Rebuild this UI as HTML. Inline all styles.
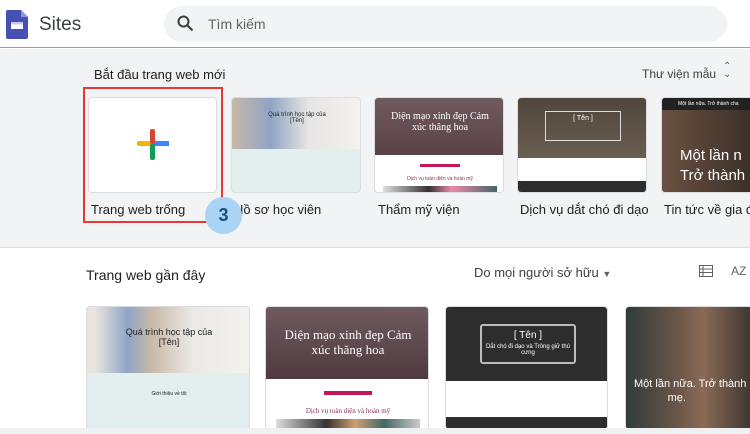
<!DOCTYPE html>
<html><head><meta charset="utf-8"><style>
*{margin:0;padding:0;box-sizing:border-box}
body{width:750px;height:434px;overflow:hidden;background:#fff;font-family:"Liberation Sans",Arial,sans-serif;color:#202124;position:relative}
.a{position:absolute;white-space:nowrap}
.hdr{left:0;top:0;width:750px;height:48px;background:#fff;border-bottom:1px solid #9aa0a6}
.gray{left:0;top:49px;width:750px;height:199px;background:#f1f3f4;border-bottom:1px solid #dadce0}
.card{border-radius:4px;overflow:hidden;border:1px solid #dadce0;background:#fff}
.lbl{font-size:13px;color:#202124}
.dark{background:#2d2d2d}
</style></head><body>
<div class="a hdr"></div>
<svg class="a" style="left:6px;top:10px" width="22" height="29" viewBox="0 0 22 29"><path d="M2 0h13l7 7v20a2 2 0 0 1-2 2H2a2 2 0 0 1-2-2V2a2 2 0 0 1 2-2z" fill="#4650b3"/><path d="M15 0v7h7z" fill="#8c93d6"/><rect x="5" y="12" width="12" height="7" fill="#fff"/><rect x="5" y="12" width="12" height="2.4" fill="#c5c8ee"/></svg>
<div class="a" style="left:39px;top:14px;font-size:19px;color:#3c4043">Sites</div>
<div class="a" style="left:164px;top:6px;width:563px;height:36px;background:#f1f3f4;border-radius:18px"></div>
<svg class="a" style="left:177px;top:15px" width="17" height="17" viewBox="0 0 17 17"><circle cx="6.5" cy="6.5" r="5" fill="none" stroke="#3c4043" stroke-width="2"/><path d="M10 10l5.5 5.5" stroke="#3c4043" stroke-width="2.2"/></svg>
<div class="a" style="left:208px;top:16px;font-size:14px;color:#5f6368">Tìm kiếm</div>

<div class="a gray"></div>
<div class="a" style="left:94px;top:67px;font-size:13px">Bắt đầu trang web mới</div>
<div class="a" style="left:642px;top:67px;font-size:12px;color:#3c4043">Thư viện mẫu</div>
<div class="a" style="left:723px;top:63px;font-size:10px;line-height:8px;color:#5f6368">⌃<br>⌄</div>

<div class="a card" style="left:88px;top:97px;width:129px;height:96px"></div>
<div class="a" style="left:137px;top:141px;width:32px;height:5px;background:#f4b400;border-radius:2px"></div>
<div class="a" style="left:153px;top:141px;width:16px;height:5px;background:#4285f4"></div>
<div class="a" style="left:150px;top:129px;width:5px;height:15px;background:#db4437;border-radius:2px"></div>
<div class="a" style="left:150px;top:144px;width:5px;height:16px;background:#0f9d58;border-radius:2px"></div>

<div class="a card" style="left:231px;top:97px;width:130px;height:96px;background:#e3efee">
 <div style="height:51px;background:linear-gradient(90deg,#c9b8a8,#8ea4c4 30%,#e8e6e2 60%,#f3f2ef)"></div>
 <div style="position:absolute;left:30px;top:14px;font-size:6px;text-align:center;width:70px;white-space:normal">Quá trình học tập của [Tên]</div>
</div>
<div class="a card" style="left:374px;top:97px;width:130px;height:96px">
 <div style="height:57px;background:linear-gradient(#6f5a5e,#5a4248)"></div>
 <div style="position:absolute;left:10px;top:13px;width:110px;font-family:'Liberation Serif',serif;font-size:10px;color:#fff;text-align:center;white-space:normal">Diện mạo xinh đẹp Cảm xúc thăng hoa</div>
 <div style="position:absolute;left:45px;top:66px;width:40px;height:3px;background:#c2185b"></div>
 <div style="position:absolute;left:10px;top:78px;width:110px;font-size:5px;color:#8a2f5a;text-align:center">Dịch vụ toàn diện và hoàn mỹ</div>
 <div style="position:absolute;left:8px;top:88px;width:114px;height:8px;background:linear-gradient(90deg,#ddd,#333 40%,#e8a 60%,#466)"></div>
</div>
<div class="a card" style="left:517px;top:97px;width:130px;height:96px">
 <div style="height:60px;background:linear-gradient(#50463c,#6a5e50)"></div>
 <div style="position:absolute;left:27px;top:13px;width:76px;height:30px;border:1px solid #ddd;color:#fff;font-size:7px;text-align:center;padding-top:3px">[ Tên ]</div>
 <div style="position:absolute;left:0;bottom:0;width:130px;height:11px;background:#2d2d2d"></div>
</div>
<div class="a card" style="left:661px;top:97px;width:95px;height:96px;background:linear-gradient(90deg,#6a5040,#3a2e28)">
 <div style="height:12px;background:#222;font-size:5px;color:#fff;padding:3px 0 0 16px">Một lần nữa. Trở thành cha</div>
 <div style="position:absolute;left:18px;top:48px;font-size:15px;color:#fff;line-height:20px">Một lần n<br>Trở thành</div>
</div>

<div class="a lbl" style="left:91px;top:202px">Trang web trống</div>
<div class="a lbl" style="left:234px;top:202px">Hồ sơ học viên</div>
<div class="a lbl" style="left:378px;top:202px">Thẩm mỹ viện</div>
<div class="a lbl" style="left:520px;top:202px">Dịch vụ dắt chó đi dạo</div>
<div class="a lbl" style="left:664px;top:202px">Tin tức về gia đình</div>

<div class="a" style="left:83px;top:87px;width:140px;height:136px;border:2px solid #e53935"></div>
<div class="a" style="left:205px;top:197px;width:37px;height:37px;border-radius:50%;background:#a9d4f5;color:#1a4d80;font-size:18px;font-weight:bold;text-align:center;line-height:37px">3</div>

<div class="a" style="left:86px;top:267px;font-size:14px">Trang web gần đây</div>
<div class="a" style="left:474px;top:265px;font-size:13px;color:#3c4043">Do mọi người sở hữu <span style="font-size:9px;color:#5f6368">▼</span></div>
<svg class="a" style="left:699px;top:265px" width="14" height="12" viewBox="0 0 14 12"><rect x="0.5" y="0.5" width="13" height="11" fill="none" stroke="#5f6368"/><path d="M0 4h14M0 7.5h14M4 0v12" stroke="#5f6368"/></svg>
<div class="a" style="left:731px;top:264px;font-size:12px;color:#5f6368">AZ</div>

<div class="a card" style="left:86px;top:306px;width:164px;height:124px;background:#e3efee">
 <div style="height:66px;background:linear-gradient(90deg,#e8e4de 5%,#8fa6c6 25%,#c9b9a8 40%,#ebe9e5 65%,#f3f2ef)"></div>
 <div style="position:absolute;left:30px;top:20px;width:104px;font-size:9px;text-align:center;white-space:normal">Quá trình học tập của [Tên]</div>
 <div style="position:absolute;left:0;top:84px;width:164px;font-size:5px;text-align:center">Giới thiệu về tôi</div>
</div>
<div class="a card" style="left:265px;top:306px;width:164px;height:124px">
 <div style="height:72px;background:linear-gradient(#6f5a5e,#4e3a40)"></div>
 <div style="position:absolute;left:8px;top:20px;width:148px;font-family:'Liberation Serif',serif;font-size:13px;line-height:15px;color:#fff;text-align:center;white-space:normal">Diện mạo xinh đẹp Cảm xúc thăng hoa</div>
 <div style="position:absolute;left:58px;top:84px;width:48px;height:4px;background:#c2185b"></div>
 <div style="position:absolute;left:0;top:100px;width:164px;font-family:'Liberation Serif',serif;font-size:7px;color:#8a2f5a;text-align:center">Dịch vụ toàn diện và hoàn mỹ</div>
 <div style="position:absolute;left:10px;top:112px;width:144px;height:12px;background:linear-gradient(90deg,#ddd,#333 35%,#d0a070 55%,#466 75%,#ccc)"></div>
</div>
<div class="a card dark" style="left:445px;top:306px;width:163px;height:124px">
 <div style="position:absolute;left:34px;top:17px;width:96px;height:40px;border:2px solid #bbb;border-radius:3px;color:#fff;text-align:center;font-size:10px;padding-top:4px;white-space:normal">[ Tên ]<div style="font-size:6px;margin-top:3px">Dắt chó đi dạo và Trông giữ thú cưng</div></div>
 <div style="position:absolute;left:0;top:74px;width:163px;height:36px;background:#fff"></div>
</div>
<div class="a card" style="left:625px;top:306px;width:130px;height:124px;background:linear-gradient(90deg,#2f3c3a,#6b5548 40%,#8a6a55 60%,#3a3430)">
 <div style="position:absolute;left:8px;top:70px;font-size:11px;color:#fff;line-height:14px">Một lần nữa. Trở thành<br>&nbsp;&nbsp;&nbsp;&nbsp;&nbsp;&nbsp;&nbsp;&nbsp;&nbsp;&nbsp;&nbsp;mẹ.</div>
</div>
<div class="a" style="left:0;top:428px;width:750px;height:6px;background:#eef0f1"></div>
</body></html>
